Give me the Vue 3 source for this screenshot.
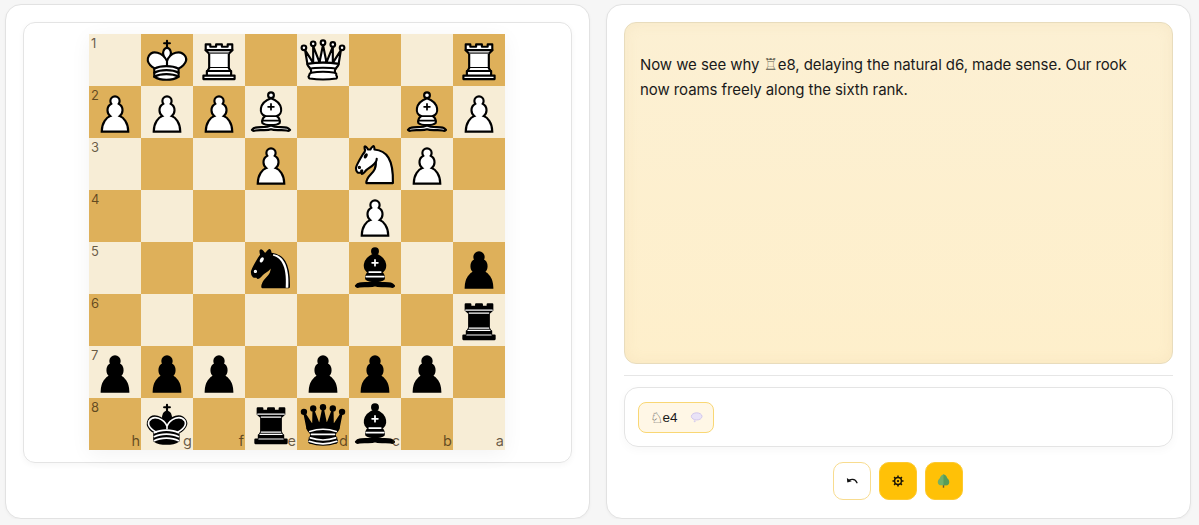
<script setup>
const baseOpen = 'fill-rule="evenodd" stroke="#000" stroke-width="1.85" stroke-linecap="round" stroke-linejoin="round"'

const pawn = (fill) =>
  `<path d="M22.5 9c-2.21 0-4 1.79-4 4 0 .89.29 1.71.78 2.38C17.33 16.5 16 18.59 16 21c0 2.03.94 3.84 2.41 5.03-3 1.06-7.41 5.55-7.41 13.47h23c0-7.92-4.41-12.41-7.41-13.47 1.47-1.19 2.41-3 2.41-5.03 0-2.41-1.33-4.5-3.28-5.62.49-.67.78-1.49.78-2.38 0-2.21-1.79-4-4-4z" fill="${fill}" stroke="#000" stroke-width="1.85" stroke-linecap="round"/>`

const bishop = (fill, mark) => `<g fill="none" ${baseOpen}>
  <g fill="${fill}" stroke-linecap="butt">
    <path d="M9 36c3.39-.97 10.11.43 13.5-2 3.39 2.43 10.11 1.03 13.5 2 0 0 1.65.54 3 2-.68.97-1.65.99-3 .5-3.39-.97-10.11.46-13.5-1-3.39 1.46-10.11.03-13.5 1-1.354.49-2.323.47-3-.5 1.354-1.94 3-2 3-2z"/>
    <path d="M15 32c2.5 2.5 12.5 2.5 15 0 .5-1.5 0-2 0-2 0-2.5-2.5-4-2.5-4 5.5-1.5 6-11.5-5-15.5-11 4-10.5 14-5 15.5 0 0-2.5 1.5-2.5 4 0 0-.5.5 0 2z"/>
    <path d="M25 8a2.5 2.5 0 1 1-5 0 2.5 2.5 0 1 1 5 0z"/>
  </g>
  <path d="M17.5 26h10M15 30h15m-7.5-14.5v5M20 18h5" stroke="${mark}" stroke-width="1.5" stroke-linejoin="miter"/>
</g>`

const horseBody = 'M22 10c10.5 1 16.5 8 16 29H15c0-9 10-6.5 8-21'
const horseHead = 'M24 18c.38 2.91-5.55 7.37-8 9-3 2-2.82 4.34-5 4-1.042-.94 1.41-3.04 0-3-1 0 .19 1.23-1 2-1 0-4.003 1-4-4 0-2 6-12 6-12s1.89-1.9 2-3.5c-.73-.994-.5-2-.5-3 1-1 3 2.5 3 2.5h2s.78-1.992 2.5-3c1 0 1 3 1 3'
const horseEye = 'M9.5 25.5a.5.5 0 1 1-1 0 .5.5 0 1 1 1 0zm5.433-9.75a.5 1.5 30 1 1-.866-.5.5 1.5 30 1 1 .866.5z'
const kingCross = 'M22.5 25s4.5-7.5 3-10.5c0 0-1-2.5-3-2.5s-3 2.5-3 2.5c-1.5 3 3 10.5 3 10.5'
const kingBody = 'M11.5 37c5.5 3.5 15.5 3.5 21 0v-7s9-4.5 6-10.5c-4-6.5-13.5-3.5-16 4V27v-3.5c-3.5-7.5-13-10.5-16-4-3 6 5 10 5 10V37z'
const kingBands = 'M11.5 30c5.5-3 15.5-3 21 0m-21 3.5c5.5-3 15.5-3 21 0m-21 3.5c5.5-3 15.5-3 21 0'

const pieces = {
  P: pawn('#fff'),
  p: pawn('#000'),
  B: bishop('#fff', '#000'),
  b: bishop('#000', '#fff'),
  R: `<g fill="#fff" ${baseOpen}>
    <path d="M9 39h27v-3H9v3zM12 36v-4h21v4H12zM11 14V9h4v2h5V9h5v2h5V9h4v5" stroke-linecap="butt"/>
    <path d="M34 14l-3 3H14l-3-3"/>
    <path d="M31 17v12.5H14V17" stroke-linecap="butt" stroke-linejoin="miter"/>
    <path d="M31 29.5l1.5 2.5h-20l1.5-2.5"/>
    <path d="M11 14h23" fill="none" stroke-linejoin="miter"/>
  </g>`,
  r: `<g ${baseOpen}>
    <path d="M9 39h27v-3H9v3zM12.5 32l1.5-2.5h17l1.5 2.5h-20zM12 36v-4h21v4H12z" stroke-linecap="butt"/>
    <path d="M14 29.5v-13h17v13H14z" stroke-linecap="butt" stroke-linejoin="miter"/>
    <path d="M14 16.5L11 14h23l-3 2.5H14zM11 14V9h4v2h5V9h5v2h5V9h4v5H11z" stroke-linecap="butt"/>
    <path d="M12 35.5h21M13 31.5h19M14 29.5h17M14 16.5h17M11 14h23" fill="none" stroke="#fff" stroke-width="1" stroke-linejoin="miter"/>
  </g>`,
  N: `<g fill="none" ${baseOpen}>
    <path d="${horseBody}" fill="#fff"/>
    <path d="${horseHead}" fill="#fff"/>
    <path d="${horseEye}" fill="#000"/>
  </g>`,
  n: `<g fill="none" ${baseOpen}>
    <path d="${horseBody}" fill="#000"/>
    <path d="${horseHead}" fill="#000"/>
    <path d="${horseEye}" fill="#fff" stroke="#fff"/>
    <path d="M24.55 10.4l-.45 1.45.5.15c3.15 1 5.65 2.49 7.9 6.75S35.75 29.06 35.25 39l-.05.5h2.25l.05-.5c.5-10.06-.88-16.85-3.25-21.34-2.37-4.49-5.79-6.64-9.19-7.16l-.51-.1z" fill="#fff" stroke="none"/>
  </g>`,
  Q: `<g fill="#fff" ${baseOpen}>
    <path d="M8 12a2 2 0 1 1-4 0 2 2 0 1 1 4 0zM24.5 7.5a2 2 0 1 1-4 0 2 2 0 1 1 4 0zM41 12a2 2 0 1 1-4 0 2 2 0 1 1 4 0zM16 8.5a2 2 0 1 1-4 0 2 2 0 1 1 4 0zM33 9a2 2 0 1 1-4 0 2 2 0 1 1 4 0z"/>
    <path d="M9 26c8.5-1.5 21-1.5 27 0l2-12-7 11V11l-5.5 13.5-3-15-3 15-5.5-14V25L7 14l2 12z" stroke-linecap="butt"/>
    <path d="M9 26c0 2 1.5 2 2.5 4 1 1.5 1 1 .5 3.5-1.5 1-1.5 2.5-1.5 2.5-1.5 1.5.5 2.5.5 2.5 6.5 1 16.5 1 23 0 0 0 1.5-1 0-2.5 0 0 .5-1.5-1-2.5-.5-2.5-.5-2 .5-3.5 1-2 2.5-2 2.5-4-8.5-1.5-18.5-1.5-27 0z" stroke-linecap="butt"/>
    <path d="M11.5 30c3.5-1 18.5-1 22 0M12 33.5c6-1 15-1 21 0" fill="none"/>
  </g>`,
  q: `<g ${baseOpen}>
    <path d="M9 26c8.5-1.5 21-1.5 27 0l2.5-12.5L31 25l-.3-14.1-5.2 13.6-3-14.5-3 14.5-5.2-13.6L14 25 6.5 13.5 9 26z" stroke-linecap="butt"/>
    <path d="M9 26c0 2 1.5 2 2.5 4 1 1.5 1 1 .5 3.5-1.5 1-1 2.5-1 2.5-1.5 1.5 0 2.5 0 2.5 6.5 1 16.5 1 23 0 0 0 1.5-1 0-2.5 0 0 .5-1.5-1-2.5-.5-2.5-.5-2 .5-3.5 1-2 2.5-2 2.5-4-8.5-1.5-18.5-1.5-27 0z" stroke-linecap="butt"/>
    <path d="M11 38.5a35 35 1 0 0 23 0" fill="none" stroke-linecap="butt"/>
    <path d="M11 29a35 35 1 0 1 23 0M12.5 31.5h20M11.5 34.5a35 35 1 0 0 22 0M10.5 37.5a35 35 1 0 0 24 0" fill="none" stroke="#fff" stroke-width="1.4"/>
    <g stroke="none">
      <circle cx="6" cy="12" r="2.75"/><circle cx="14" cy="9" r="2.75"/><circle cx="22.5" cy="8" r="2.75"/><circle cx="31" cy="9" r="2.75"/><circle cx="39" cy="12" r="2.75"/>
    </g>
  </g>`,
  K: `<g fill="none" ${baseOpen}>
    <path d="M22.5 11.63V6M20 8h5" stroke-linejoin="miter"/>
    <path d="${kingCross}" fill="#fff" stroke-linecap="butt" stroke-linejoin="miter"/>
    <path d="${kingBody}" fill="#fff"/>
    <path d="${kingBands}"/>
  </g>`,
  k: `<g fill="none" ${baseOpen}>
    <path d="M22.5 11.63V6" stroke-linejoin="miter"/>
    <path d="${kingCross}" fill="#000" stroke-linecap="butt" stroke-linejoin="miter"/>
    <path d="${kingBody}" fill="#000"/>
    <path d="M20 8h5" stroke-linejoin="miter"/>
    <path d="M32 29.5s8.5-4 6.03-9.65C34.15 14 25 18 22.5 24.5v2.1-2.1C20 18 10.85 14 6.97 19.85 4.5 25.5 13 29.5 13 29.5" stroke="#fff" stroke-width="1.4"/>
    <path d="${kingBands}" stroke="#fff" stroke-width="1.4"/>
  </g>`
}

// board is seen from black's side: h file on the left, rank 1 on top
const position = [
  '.KR.Q..R',
  'PPPB..BP',
  '...P.NP.',
  '.....P..',
  '...n.b.p',
  '.......r',
  'ppp.ppp.',
  '.k.rqb..'
]
const files = ['h', 'g', 'f', 'e', 'd', 'c', 'b', 'a']

const squares = []
position.forEach((row, r) => {
  row.split('').forEach((ch, c) => {
    squares.push({
      id: r + '-' + c,
      light: (r + c) % 2 === 0,
      piece: ch === '.' ? null : ch,
      rank: c === 0 ? r + 1 : null,
      file: r === 7 ? files[c] : null
    })
  })
})
</script>

<template>
  <div class="page">
    <section class="card">
      <div class="board-card">
        <div class="board">
          <div
            v-for="sq in squares"
            :key="sq.id"
            class="square"
            :class="sq.light ? 'light' : 'dark'"
          >
            <svg v-if="sq.piece" class="piece" viewBox="0 0 45 45" v-html="pieces[sq.piece]"></svg>
            <span v-if="sq.rank" class="rank">{{ sq.rank }}</span>
            <span v-if="sq.file" class="file">{{ sq.file }}</span>
          </div>
        </div>
      </div>
    </section>

    <section class="card">
      <div class="comment">
        <p>Now we see why <span class="glyph">♖</span>e8, delaying the natural d6, made sense. Our rook now roams freely along the sixth rank.</p>
      </div>
      <hr class="divider" />
      <div class="moves">
        <div class="chip">
          <span class="chip-glyph">♘</span><span class="chip-move">e4</span>
          <svg class="bubble" viewBox="0 0 14 12" width="13" height="11">
            <ellipse cx="7.2" cy="4.8" rx="5.8" ry="3.9" fill="#e9e3f7" stroke="#cfc3ea" stroke-width="1" />
            <circle cx="5" cy="10" r="1.1" fill="#d8cfee" />
          </svg>
        </div>
      </div>
      <div class="actions">
        <button class="btn btn-light" type="button">
          <svg viewBox="0 0 14 10" width="12" height="9" fill="none">
            <path d="M2.6 4.6C5 1.6 10.6 1.4 12.8 6.4" stroke="#111" stroke-width="1.6" stroke-linecap="round" />
            <path d="M1 .9l.6 5.4 5-1.6z" fill="#111" />
          </svg>
        </button>
        <button class="btn" type="button">
          <svg viewBox="0 0 16 16" width="12" height="12">
            <circle cx="8" cy="8" r="4.6" fill="none" stroke="#1a1408" stroke-width="2" />
            <circle cx="8" cy="8" r="1.5" fill="#1a1408" />
            <path d="M8 .6v2.8M8 12.6v2.8M.6 8h2.8M12.6 8h2.8M2.8 2.8l2 2M11.2 11.2l2 2M2.8 13.2l2-2M11.2 4.800l2-2" stroke="#1a1408" stroke-width="2" />
          </svg>
        </button>
        <button class="btn" type="button">
          <svg viewBox="0 0 13 14" width="13" height="14">
            <rect x="5.800" y="9.500" width="1.400" height="4.200" fill="#6b5a35" />
            <path d="M6.500.3C8.400 1 9.700 2.600 10.200 4.200c1.500 1.200 2.300 3 1.900 4.700-.4 1.500-1.600 2.300-3 2.300H3.900C2.500 11.200 1.300 10.400.9 8.900.5 7.200 1.300 5.400 2.800 4.200 3.300 2.600 4.600 1 6.500.3z" fill="#72b067" />
            <path d="M6.500.3c1.900.7 3.200 2.300 3.700 3.900 1.500 1.200 2.300 3 1.900 4.700-.4 1.500-1.600 2.300-3 2.300H6.500z" fill="#579c58" />
          </svg>
        </button>
      </div>
    </section>
  </div>
</template>

<style>
body {
  background: #f6f6f6;
}
</style>

<style scoped>
.page {
  display: grid;
  grid-template-columns: 585px 585px;
  column-gap: 16px;
  padding: 4px 8px 0 5px;
  height: 515px;
  font-family: Inter, "Noto Sans", sans-serif;
  color: #1a1a1a;
}
.card {
  background: #fff;
  border: 1px solid #e2e2e2;
  border-radius: 16px;
  padding: 17px;
  height: 515px;
  box-sizing: border-box;
  box-shadow: 0 1px 3px rgba(0, 0, 0, 0.04);
}
.board-card {
  border: 1px solid #e4e4e4;
  border-radius: 12px;
  padding: 11px 1px 12px 0;
  display: flex;
  justify-content: center;
  box-shadow: 0 2px 6px rgba(0, 0, 0, 0.04);
}
.board {
  display: grid;
  grid-template-columns: repeat(8, 52px);
  grid-auto-rows: 52px;
  box-shadow: 0 4px 20px rgba(0, 0, 0, 0.05);
}
.square {
  position: relative;
}
.light {
  background: #f7edd6;
}
.dark {
  background: #deb05a;
}
.piece {
  display: block;
  width: 52px;
  height: 52px;
  overflow: visible;
}
.rank,
.file {
  position: absolute;
  line-height: 14px;
  color: rgba(50, 35, 10, 0.72);
}
.rank {
  left: 2px;
  top: 2px;
  font-size: 13px;
}
.file {
  right: 1px;
  bottom: 2px;
  font-size: 14.5px;
}
.comment {
  height: 342px;
  box-sizing: border-box;
  padding: 29px 15px;
  border: 1px solid #e8dcbd;
  border-radius: 12px;
  background: linear-gradient(180deg, #fcf0d3 0%, #feefcb 100%);
  box-shadow: inset 0 0 14px rgba(205, 180, 120, 0.12);
  font-size: 15px;
  line-height: 25px;
  letter-spacing: -0.08px;
}
.comment p {
  margin: 0;
}
.glyph {
  font-family: "DejaVu Sans", sans-serif;
  font-size: 16px;
  line-height: 1;
  color: #5f5b4e;
}
.divider {
  border: 0;
  border-top: 1px solid #e6e6e6;
  margin: 11px 0;
}
.moves {
  height: 60px;
  box-sizing: border-box;
  border: 1px solid #e4e4e4;
  border-radius: 14px;
  padding: 14px 13px;
  box-shadow: 0 3px 10px rgba(0, 0, 0, 0.03);
}
.chip {
  display: inline-flex;
  align-items: center;
  height: 31px;
  width: 76px;
  box-sizing: border-box;
  padding: 0 11px;
  border: 1px solid #f9d774;
  border-radius: 8px;
  background: #fff7e6;
  font-family: "Liberation Sans", sans-serif;
  font-size: 13.5px;
}
.chip-glyph {
  font-family: "DejaVu Sans", sans-serif;
  font-size: 15px;
  margin-right: -1px;
  color: #444;
  flex: none;
}
.chip-move {
  margin-right: 13px;
  flex: none;
}
.bubble {
  flex: none;
}
.actions {
  display: flex;
  justify-content: center;
  gap: 8px;
  margin-top: 15px;
  padding-right: 2px;
}
.btn {
  width: 38px;
  height: 38px;
  padding: 0;
  display: flex;
  align-items: center;
  justify-content: center;
  background: #ffc107;
  border: 1px solid #fdc92f;
  border-radius: 10px;
}
.btn-light {
  background: #fff;
  border-color: #f8dc8f;
}
</style>
